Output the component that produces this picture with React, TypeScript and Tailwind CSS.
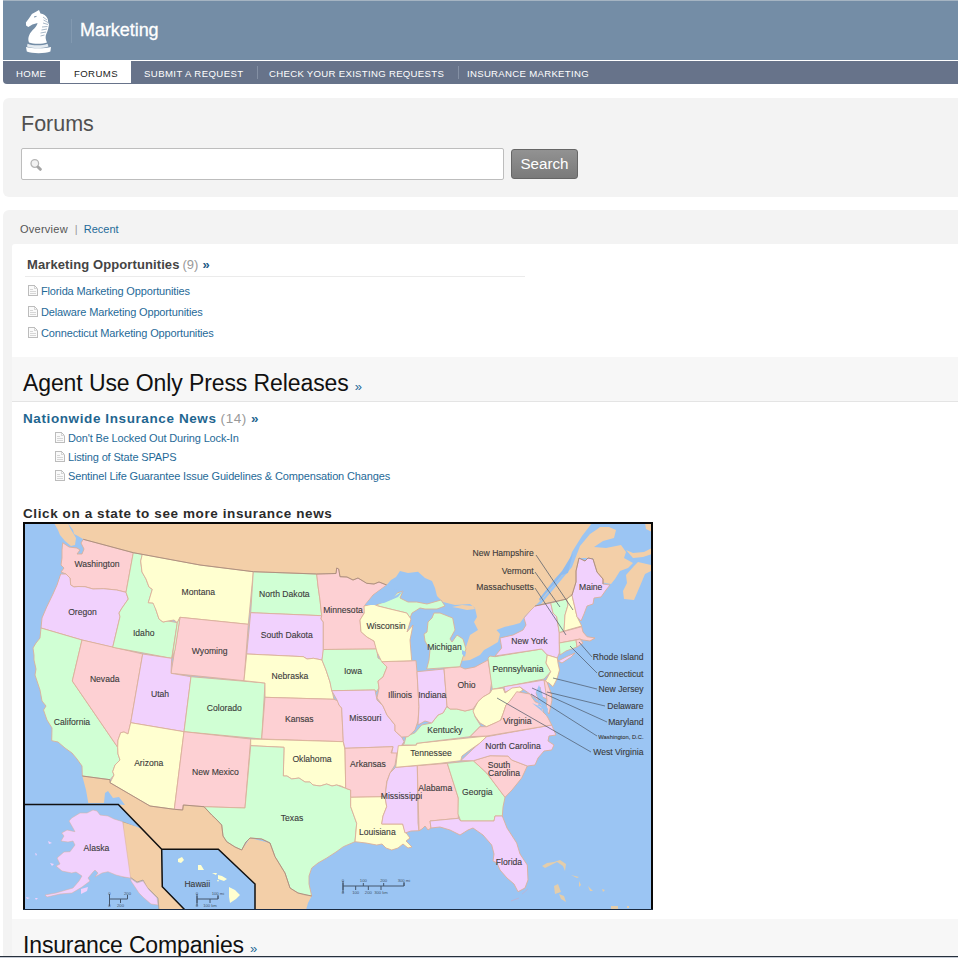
import React from "react";

const GREEN = "#d0ffd4";
const PINK = "#fdd0d3";
const VIOLET = "#f1d1fd";
const CREAM = "#ffffd0";
const LAND = "#f3cfa8";
const WATER = "#9bc5f3";

const land: string[] = [
  // Canada, from the Pacific coast to the Gulf of St Lawrence
  "68,523 70,526 73,530 74,534 78,536 83.3,539.3 133.3,552.7 200,565 253.3,571.7 316.7,574 336,573.5 336.7,568 338.7,569 340,576.7 347,577 353,580 358,578 366.7,583.3 374,584 379,582 386.7,585 391,580 396,577 400,571 408,573 418,571.7 425,578 432,581 435,588 437,596 443,602 455,605 470,604 475,608 477,617 474,622 478,630 470,635 465,650 463,656 461.5,661 470,660 480,655 484,650 490,646.7 498,642 500,634 496.5,630 505,626.7 513,625 520,623 525,616 535,606 545,596 556,582 566,571 572,552 582,536 592,523",
  // New Brunswick and the Gaspe
  "541,604 552,591 562,579 572,567 580,546 590,534 596,530 600,527 609,527 616,530 614,538 603,541 594,547 606,548 621,545 626,552 624,558 633,563 628,568 620,571 615,579 611,584 600,582 593,558 580,558 576,582 573,594 566.7,599",
  // Nova Scotia
  "626,575 634,566 638,562 651,565 651,571 645,574 640,586 634,600 624,599 623,591 627,583",
  "626,550 633,553 644,552 652,548 652,554 643,557 633,558",
  "645,523 652,523 652,532 646,529",
  // Vancouver Island
  "54,523 68,523 70,528 76,538 75,545 71,546 65,541 60,535 58,530",
  // Manitoulin
  "452,607 462,605 473,606 475,609 467,610 458,608",
  // Mexico
  "82.3,776 110,779.7 110,782.7 150,806 174.3,809.3 182.7,810 183.3,805 204,806.7 212,815 221.7,825 226.7,841.7 241.7,850 250,838 270,843 285,873 290,888 311.7,896 308,903 306,910 255,910 150,910 115,803 88.3,803 86,790",
];

const states: [string, string][] = [
  [PINK, "62.7,542.7 69,547 77,548 80,550 77,554 82,554 84,549 81,543 83.3,539.3 133.3,552.7 126,592.3 116.7,590 103.3,588.7 93,589 85,586.7 78,586.5 74,587 70.7,585 70,578 66,574 61,572 64,568 61,565 62,558 62,550"],
  [VIOLET, "60.7,574 66,574 70,578 70.7,585 74,587 78,586.5 85,586.7 93,589 103.3,588.7 116.7,590 126,592.3 128.3,599 122,608 119,613 120,616.7 112.7,647.3 82,640 41,628 42,618 46.7,607 53,594 57,585"],
  [GREEN, "41,628 82,640 72.3,681 117.7,747.3 118,754 120,760 115,765 112.7,771.7 114,775 110,779.7 82.3,776 82,766 77,759 72,753 65,748 58,742 51.7,740.7 52,728 47,720 43.5,710 46,706 42,701 40,690 35,675 36,669 34,660 34,655 33,648 36,643 40,638"],
  [PINK, "82,640 142.7,654 130.7,722.7 128,734 124,732 120.7,732.7 118,740 117.7,747.3 72.3,681"],
  [GREEN, "133.3,552.7 142.3,554.3 140.7,561 142,572 146,579 149,587 152.3,589.3 150,597 148.3,602.7 154,603 156,610 159,619 163,622 168,621 174,622 177.3,622.7 171.7,658.3 112.7,647.3 120,616.7 119,613 122,608 128.3,599 126,592.3"],
  [CREAM, "142.3,554.3 200,565 253.3,571.7 248.3,624.3 180,617.3 177.3,622.7 174,620 168,621 163,622 159,619 156,610 153,603 148.3,602.7 150,597 152.3,589.3 149,587 146,579 142,572 140.7,561"],
  [PINK, "180,617.3 248.3,624.3 244,680.7 171,673.3"],
  [GREEN, "180,617.3 177.3,622.7 172,658.3 175,650"],
  [VIOLET, "142.7,654 171.7,658.3 171,673.3 191,676.7 184,731.7 130.7,722.7"],
  [GREEN, "191,676.7 265,683 261.7,739 184,731.7"],
  [CREAM, "130.7,722.7 184,731.7 174.3,809.3 150,806 110,782.7 114,775 112.7,771.7 115,765 120,760 118,754 117.7,747.3 118,740 120.7,732.7 124,732 128,734"],
  [PINK, "184,731.7 250.7,739 245,808 204,806.7 183.3,805 182.7,810 174.3,809.3"],
  [GREEN, "253.3,571.7 316.7,574 318,586 320,600 321.7,615.7 250.7,612.7"],
  [VIOLET, "250.7,612.7 321.7,615.7 321,619 323.3,622 323.3,651.7 322,660 313.3,658.3 307,659 303.3,656.7 246.7,654"],
  [CREAM, "246.7,654 303.3,656.7 307,659 313.3,658.3 322,660 326,670 330,682 334,699.3 265,697.3 265,683 244,680.7"],
  [PINK, "265,697.3 334,699.3 338,701 339,705 341.7,708 343.3,741.7 261.7,739"],
  [CREAM, "250.7,739 343.3,741.7 345,750 345.7,788.3 341,786 336.7,785 332,786 326.7,784 320,786 313,785 310,782 305,782 299,778 291.7,779 287,776 283.3,776 284,747.3 250.7,745.7"],
  [GREEN, "250.7,745.7 284,747.3 283.3,776 287,776 291.7,779 299,778 305,782 310,782 313,785 320,786 326.7,784 332,786 336.7,785 345.7,788.3 350.7,790 350.7,806.7 356.7,823.3 355,841.7 343.3,846.7 336,852 326.7,858 318,863 311.7,868 309,876 309,884 311.7,896 305,895 298,893 290,888 285,873 275,856.7 270,843 261.7,839 250,838 246,842 241.7,850 235,847 226.7,841.7 223,836 221.7,825 216,819 211.7,815 204,806.7 245,808"],
  [PINK, "316.7,574 336,573.5 336.7,568 338.7,569 340,576.7 347,577 353,580 358,578 366.7,583.3 374,584 379,582 386.7,585 373,595 365,605 364.3,613 360,620 361,631.7 367,637 374,641 376.7,649 323.3,649.5 323.3,622 321,619 321.7,615.7 320,600 318,586"],
  [GREEN, "323.3,649.5 376.7,649 378,658 383,661 387,667 383,677 378,681 379,688 376,692 375,690 331.7,690.7 330,682 326,670 322,660"],
  [VIOLET, "331.7,690.7 375,690 377,700 383,706 387,715 395,725 395,731 401.7,737 404,741.7 400,748 397,754 391.7,753 393,746.7 345,748.3 343.3,741.7 341.7,708 339,705 337,700"],
  [PINK, "345,748.3 393,746.7 391,753 397,753 395,765 390,773 386.7,781.7 385,796.7 350.7,797.3 350.7,790 345.7,788.3"],
  [CREAM, "350.7,797.3 385,796.7 386.7,806.7 383,816 381.7,824 402.7,824 405,831.7 407,834 410,838 406,841 412,847 408,848 403,844 398,848 391.7,850 386,848 382,844 376.7,845 366,843 355,841.7 356.7,823.3 350.7,806.7"],
  [VIOLET, "395.7,767.3 417.3,765.7 418,823 419,830.7 411,831 405,833 402.7,824 381.7,824 383,816 386.7,806.7 385,796.7 387,781.7 390,773"],
  [PINK, "417.3,765.7 447.3,763.3 458.3,798 458.3,818.3 430,821 431,828 428,830 425,826 422,829 419,830.7"],
  [GREEN, "447.3,763.3 473.3,760.7 486.7,773 505,797.3 503,807 502.3,816 495,816 494,821 460.7,821 458,814 458.3,798"],
  [VIOLET, "430,821 458.3,818.3 460.7,821 494,821 495,816 502.3,816 507,828 516.7,843 520,854 527.3,865 528,880 525,888 518,891.7 514,884 507,878 500,870 497,863 493,861 494,854 491.7,845 483,835 473,828 468,830 460,835 450,830 440,827 431,828"],
  [PINK, "473.3,760.7 490,755.7 508,756 511.7,760 527.3,766 521.7,778 512,790 505,797.3 495,784 486.7,773"],
  [VIOLET, "460.7,760.7 473,749 486.7,736.7 551.7,725 556,735 549,736 548,741 554,745 551.7,750 544,751 538,758 535,765 527.3,766 511.7,760 508,756 490,755.7 473.3,760.7"],
  [CREAM, "398.3,745.7 416.7,745 416.7,743.3 487,736 480,743 470,750 462,756 460.7,760.7 440,763.3 395.7,767.3"],
  [GREEN, "404,744 406,736.7 415,732.7 421.7,725 431.7,723 438,715 443,713 446.7,706.7 450,709 456.7,709 465,711 473.3,709 475,716.7 480.7,725.7 470,736.7 416.7,743.3 416,745 402,745"],
  [PINK, "381.7,661.7 416,660.7 417,672 419,706.7 418,721 415,730 408,736.7 401.7,737 395,731 395,725 387,715 383,706 377,698 379,688 378,681 383,677 387,667"],
  [VIOLET, "417,671.7 444,669 447,706 443,713 438,715 431.7,723 425,721 418,725 419,706.7"],
  [PINK, "444,668.3 460,666.7 465,669 475,667 488,660 491.7,681.7 490,693 483,697 478,701.7 473,709 465,711 456.7,709 450,709 447,706"],
  [GREEN, "426.7,669 429,660 430,650 425,641 424,634 427,632 428,622 432,618 434,613 440,613 452.7,618 455,630 450,639 452,642 457,635 463,639 466,649 463,657 460,666.7"],
  [GREEN, "369,608 393,598 397,593 403,591 400,598 408,602 416.7,602 427,604 441,600 445,606 437,609 425,609 420,608 412,613 410,618 406.7,613 390,609 378,606"],
  [CREAM, "364,606 373,604 378,606 390,609 406.7,613 411,619 407,632 413,625 410,640 411.7,660.7 381.7,661.7 377,652 374,641 367,637 361,631.7 360,620 364.3,613"],
  [GREEN, "488,658 490,656 495,656.7 541.7,649 547.3,655 546,663 550.7,671.7 544,679 492.3,689.3"],
  [VIOLET, "495,656 501.7,648 500,638 513,635 523,630 526,625 524,618 530,611 535,606 550.7,603 553,613 556.7,616.7 559.3,633 559.3,653 557.3,658 547.3,655 541.7,649"],
  [VIOLET, "558,661 568,656 575,653 571,657 562,663"],
  [CREAM, "547.3,655 557.3,658 558,663 559.5,670 557,679 553,686.7 549,683 545,681.7 550.7,671.7 546,663"],
  [VIOLET, "504,686.7 544,680 548,693 552,694 550,700 542,697 540,687 536,693 539,701 530,694 520,687 505,692"],
  [PINK, "544,680 547,682 551,693 552,700 549,714 546,710 547,700"],
  [GREEN, "550.7,603 566.7,599 568,605 565,615 564,631 559.3,632.7 556.7,616.7 553,613"],
  [CREAM, "566.7,599 571.7,594 577,616.7 581.7,626 564,631 565,615 568,605"],
  [VIOLET, "572,595 576,582 576,571 579,558 585,561 588,558 593,559 597,572 603,579 603,584 610,585 606,590 601,597 594,598 593,604 587,606 584,614 581,621 577,616.7"],
  [PINK, "559.3,632.7 581.7,626.7 583,632 587,636.7 595,638 590,641 583,640 580,639 559.3,643"],
  [GREEN, "559.3,643 576,640 577,647 566,651 560,655"],
  [PINK, "576,640 580,639 583,643 577,647"],
  [CREAM, "492.3,689.3 503,688 505,693 512,688 520,687 523,690 515,695 510,701 506,705 503,714 500,721 495,723 486.7,726.7 480,723 475,716 473,711 478,701.7 483,697 490,693"],
  [PINK, "470,736.7 480,726.7 486.7,726.7 495,723 501,720 503,714 506,705 510,701 516.7,691.7 530,694 535,701.7 543,705 543,712 547,716 551.7,725 487,736"],
];

const labels: [string, number, number][] = [
  ["Washington", 97, 567.5], ["Oregon", 82.5, 615.5], ["Idaho", 143.7, 636.5], ["Montana", 198.3, 595],
  ["Wyoming", 209.7, 654.5], ["Nevada", 104.7, 682.5], ["Utah", 160, 697], ["Colorado", 224.3, 711.5],
  ["California", 72, 725.5], ["Arizona", 148.7, 766], ["New Mexico", 215.5, 775], ["North Dakota", 284.3, 597],
  ["South Dakota", 286.7, 638.7], ["Nebraska", 290, 679], ["Kansas", 299.3, 722], ["Oklahoma", 312, 762.5],
  ["Texas", 292, 821], ["Minnesota", 343, 613], ["Wisconsin", 386, 629.5], ["Iowa", 353, 674.5],
  ["Missouri", 365.3, 721.5], ["Arkansas", 368, 767.5], ["Louisiana", 377.3, 835.5], ["Mississippi", 401.5, 799.5],
  ["Alabama", 435.3, 791], ["Illinois", 400, 698.5], ["Indiana", 432.3, 698], ["Michigan", 444.5, 650.5],
  ["Ohio", 466.5, 688.5], ["Kentucky", 445, 733.5], ["Tennessee", 431, 756.5], ["Georgia", 477.3, 795.5],
  ["Florida", 509, 865.5], ["South", 499, 768], ["Carolina", 504, 776.5], ["North Carolina", 513, 749.5],
  ["Virginia", 517.3, 724.7], ["Pennsylvania", 518, 672], ["New York", 529.5, 644.5], ["Maine", 590.7, 590.7],
  ["Alaska", 96.5, 851.5], ["Hawaii", 197.3, 887.5],
];

const callouts: [string, number, number][] = [
  ["New Hampshire", 533.7, 556.7], ["Vermont", 533.7, 574], ["Massachusetts", 533.7, 590.5],
  ["Rhode Island", 643.5, 660.7], ["Connecticut", 643.5, 677], ["New Jersey", 643.5, 692.5],
  ["Delaware", 643.5, 709.5], ["Maryland", 643.5, 725], ["West Virginia", 643.5, 755.5],
];

const leaders = [
  "536,555 573,610", "535,572 560,607", "535,588 566,635", "592,657 579,642", "597,673 570,646",
  "597,689 553,678", "605,706 547,692", "607,722 532,688", "597,736 531,694", "591,752 497,698",
];

function ScaleBar({ x, y, w, top, bottom, span }: { x: number; y: number; w: number; top: string[]; bottom: string[]; span: number }) {
  return (
    <g stroke="#44566c" strokeWidth="1" fill="none">
      <path d={`M${x} ${y - 5}V${y + 7}M${x} ${y}H${x + w}V${y - 4}`} />
      {top.map((t, i) => (
        <g key={i}>
          <path d={`M${x + (w * i) / (top.length - 1)} ${y - 3}V${y}`} />
          <text x={x + (w * i) / (top.length - 1)} y={y - 4} fontSize="4.2" textAnchor="middle" fill="#44566c" stroke="none">{t}</text>
        </g>
      ))}
      {bottom.map((t, i) => (
        <g key={i}>
          <path d={`M${x + (span * i) / (bottom.length - 1)} ${y}V${y + 4}`} />
          <text x={x + (span * i) / (bottom.length - 1)} y={y + 8} fontSize="4.2" textAnchor="middle" fill="#44566c" stroke="none">{t}</text>
        </g>
      ))}
    </g>
  );
}

function UsMap() {
  return (
    <svg viewBox="23 522 630 388" className="block h-[388px] w-[630px]">
      <rect x="23" y="522" width="630" height="388" fill={WATER} />
      {land.map((p, i) => <polygon key={i} points={p} fill={LAND} />)}
      <g stroke="#dbb09a" strokeWidth="0.9" strokeLinejoin="round">
        {states.map(([c, p], i) => <polygon key={i} points={p} fill={c} />)}
      </g>
      <g fill="none" stroke="#a98d7c" strokeWidth="0.9" strokeLinejoin="round">
        <polyline points="83.3,539.3 133.3,552.7 200,565 253.3,571.7 316.7,574 336,573.5 336.7,568 338.7,569 340,576.7 347,577 353,580 358,578 366.7,583.3 374,584 379,582 386.7,585" />
        <polyline points="82.3,776 110,779.7 110,782.7 150,806 174.3,809.3 182.7,810 183.3,805 204,806.7 211.7,815 216,819 221.7,825 223,836 226.7,841.7 235,847 241.7,850 246,842 250,838 261.7,839 270,843 275,856.7 285,873 290,888 298,893 311.7,896" />
        <polyline points="535,606 566.7,599 572,595 576,582 576,571 579,558 585,561 588,558 593,559 597,572 603,579 603,584" />
      </g>
      {/* Chesapeake and Delaware bays */}
      <path d="M539 685l-3 7 3 9-1 5 6 4 3 7 1-8-4-7-2-9zM531 697l8 4 3 5zM532 703l9 4 2 5z" fill={WATER} />
      {/* Lake St Clair, western Lake Superior and the St Lawrence */}
      <path d="M462 650l4 2-1 5-3-3z" fill={WATER} />
      <path d="M365 605l10-11 12-9 14-8 2 3-9 10 6-1-7 9-18 7zM375 604l16-5 13-9-6 7-14 6z" fill={WATER} />
      <path d="M540 601l22-26 6-2 5-20-11 18-8 9-15 19" fill="#8fbcef" />
      {/* Gulf of California */}
      <path d="M104 803l1-10 3-2 5 7 6-1 6 8z" fill={WATER} />

      <g>
        <polygon points="23,804.5 118.3,804.5 161.7,849.3 162.3,886.7 185,910 23,910" fill={WATER} />
        <polygon points="122.7,821.7 135,825.7 138,824 161.7,849.3 162.3,886.7 185,910 159,910 158,898 147,887 143,880 137,882 130,877 122.7,876.7" fill={LAND} stroke="#a98d7c" strokeWidth="0.6" />
        <path d="M118 804.5L142 829 132 825 122 821 108 816z" fill={WATER} />
        <polygon points="122.7,821.7 114,819 108,816 100,815 97,811 93,810 87,813 80,813 71.7,818 69,821 73,828 75,831.7 67,830 61.7,833 64,836 61,841 68,842 73,841 75,845 70,851.7 64,852 57,858 60,864 56,866 62,871 71.7,873 76,872 82,876 79,881 73,888 66,890 56,893 45,895 47,897 60,894 72,893 82,887 90,881 88,878 93,872 95,870 98,873 95,877 102,873 108,871.7 116,875 122.7,876.7 130,878 137,883 143,881 149,890 157,898 158,905 151,904 144,898 139,893 135,887 131,881" fill={VIOLET} stroke="#dbb09a" strokeWidth="0.5" />
        <path d="M81 889l7-2-1 4-6 3zM50 863l4 1-2 2zM48 841l4 2-3 1zM35 853l2 1-1 2zM35 898l3 0-2 2zM26 897l4 1-3 1z" fill={VIOLET} />
        <polygon points="161.7,849.3 218.3,849.3 255,884 255,910 185,910 162.3,886.7" fill={WATER} />
        <path d="M178 859l4-2 2 3-3 3-3-1zM198 865l3 0 3 5-6 0zM212 873l5 0-1 2zM218 875l4 1 5 3-3 2-6-2zM217 880l2 0-1 2zM229 887l6 3 5 5-4 4-6 4-1-6z" fill={CREAM} />
        <path d="M23 804.5H118.3L161.7 849.3H218.3L255 884V910M161.7 849.3L162.3 886.7 185 910" fill="none" stroke="#111" strokeWidth="1.5" />
      </g>

      {/* Bahamas and Cuba */}
      <path d="M542 866l5-3 7-1 6-2 6 4-1 7-2-5-6-4-6 3-6 3zM554 886l4-2 3 8-6 2zM559 894l5 2 2 6-5-3zM571 875l8 2-2 1zM579 881l2 4-2 2zM588 886l5 5-3 0zM602 889l3 1-2 2zM611 906l7 0 0 3-7 0zM627 906l2 0 0 2-2 0z" fill="#e4cdaa" />
      <path d="M511 901l8-3M522 894l6-5" stroke="#b9b6d8" strokeWidth="1" fill="none" />

      <g fill="none" stroke="#4b5666" strokeWidth="0.7">
        {leaders.map((p) => <polyline key={p} points={p} />)}
      </g>
      <g transform="translate(0 -0.4)" fill="#3a3a3a" stroke="#3a3a3a" strokeWidth="0.1" fontSize="8.6" fontFamily='"Liberation Sans", Arial, sans-serif'>
        {labels.map(([t, x, y]) => <text key={t} x={x} y={y} textAnchor="middle">{t}</text>)}
        {callouts.map(([t, x, y]) => <text key={t} x={x} y={y} textAnchor="end">{t}</text>)}
        <text x="643.5" y="739.5" fontSize="5.8" textAnchor="end">Washington, D.C.</text>
      </g>
      <g fontFamily='"Liberation Sans", Arial, sans-serif'>
        <ScaleBar x={343} y={886} w={61} span={38} top={["0", "100", "200", "300 mi"]} bottom={["0", "100", "200", "300 km"]} />
        <ScaleBar x={109.5} y={899} w={18} span={11} top={["0", "200"]} bottom={["0", "200"]} />
        <ScaleBar x={197} y={899} w={21} span={13} top={["0", "100 mi"]} bottom={["0", "100 km"]} />
      </g>
      <path d="M24 522V910M652 522V910" stroke="#080808" strokeWidth="2" />
      <path d="M23 523H653" stroke="#080808" strokeWidth="2" />
      <path d="M23 909.5H653" stroke="#1a2a40" strokeWidth="1" />
    </svg>
  );
}

function Knight() {
  return (
    <svg viewBox="24 9 30 46" className="h-[46px] w-[30px]">
      <path d="M39 10l1.500 3.500c3 .5 5.500 2 7 5 .8 2 .3 4 1.500 6-.5 3-1 6-2.500 9-1.500 3-1 6 .5 9-4 1.800-14 1.800-18 0-2-5 .8-10 5.300-14 2-2 3-4 3.200-5.500-2 .8-4.700.8-6.700 2.500l-2.500 1.500-2.200-1.500-.2-3 3-4 3-4.500 4.500-2.500z" fill="#fff" />
      <path d="M43 17l4 3M43.500 20l4.500 2.500M43 23l5 1.500M42 27l5.500-.5M41.500 30l5.500-1M40.500 33l5.500-1M40.500 36l4-1" stroke="#90a4b9" strokeWidth="0.8" />
      <path d="M34 17l2.500-.6" stroke="#748da6" strokeWidth="1" />
      <path d="M27.500 43.800c5 2 15 2 20 0l1 2.700c-6 2.200-16 2.200-21.500 0z" fill="#e3eaf0" />
      <path d="M26 47c6 1.800 19 1.800 25 0l-.6 4.500c-5 2.200-18.500 2.200-23.600 0z" fill="#fff" />
    </svg>
  );
}

function DocIcon() {
  return (
    <svg viewBox="0 0 10 12" className="mb-[2px] h-[12px] w-[10px] shrink-0" shapeRendering="crispEdges">
      <path d="M.5.5h6l3 3v7h-9z" fill="#fafafa" stroke="#bcbcbc" />
      <path d="M6.500.5v3h3M2 4.500h3M2 6.500h6M2 8.500h6" stroke="#d6d6d6" fill="none" />
    </svg>
  );
}

function TopicLink({ text, className }: { text: string; className: string }) {
  return (
    <li className={"flex items-center text-[11px] text-[#1f6a98] " + className}>
      <DocIcon />
      <a className="ml-[3px]">{text}</a>
    </li>
  );
}

export default function App() {
  return (
    <div className="flex h-[958px] w-[958px] flex-col overflow-hidden whitespace-nowrap bg-white font-['Liberation_Sans',Arial,sans-serif] leading-none">
      <header className="ml-[3px] shrink-0">
        <div className="flex h-[60px] items-center border-t border-[#a5b4c2] bg-[#748da6]">
          <div className="ml-[21px] mt-[3px]"><Knight /></div>
          <div className="ml-[17px] h-[24px] w-px bg-[#8299b0]" />
          <h1 className="ml-[8px] mt-[-2px] text-[18px] tracking-[-0.05px] text-white [-webkit-text-stroke:0.3px_white]">Marketing</h1>
        </div>
        <nav className="mt-px flex h-[23px] items-center rounded-bl-[4px] bg-[#67738a] text-[9.6px] tracking-[0.4px] text-white">
          <a className="w-[57px] pl-[13px] pt-[2px]">HOME</a>
          <a className="flex h-[22px] w-[71px] items-center self-start bg-white pl-[14px] pt-[3px] text-[#222]">FORUMS</a>
          <a className="w-[126px] pl-[13px] pt-[2px]">SUBMIT A REQUEST</a>
          <a className="w-[201px] border-l border-[#8490a4] pb-[1px] pl-[11px] pt-[3px] tracking-[0.3px]">CHECK YOUR EXISTING REQUESTS</a>
          <a className="border-l border-[#8490a4] pb-[1px] pl-[8px] pt-[3px] tracking-[0.3px]">INSURANCE MARKETING</a>
        </nav>
      </header>

      <section className="ml-[3px] mt-[14px] h-[99px] shrink-0 rounded-l-[6px] bg-[#f3f3f3] pl-[18px] pt-[15px]">
        <h2 className="text-[21.5px] leading-[22px] text-[#505050]">Forums</h2>
        <div className="mt-[13px] flex items-center">
          <div className="flex h-[32px] w-[483px] items-center rounded-[2px] border border-[#bdbdbd] bg-white pl-[8px]">
            <svg viewBox="0 0 12 12" className="mt-[1px] h-[12px] w-[12px]" fill="none">
              <circle cx="4.8" cy="4.5" r="3.8" stroke="#b5b5b5" strokeWidth="1.3" fill="#f3f3f3" />
              <path d="M8 8l2.300 2.300" stroke="#a5a5a5" strokeWidth="3" strokeLinecap="round" />
            </svg>
          </div>
          <button className="ml-[7px] h-[30px] w-[67px] rounded-[3px] border border-[#666] bg-gradient-to-b from-[#929292] to-[#7a7a7a] text-[15.2px] leading-none text-white">Search</button>
        </div>
      </section>

      <main className="ml-[3px] mt-[13px] flex min-h-0 grow flex-col rounded-tl-[6px] bg-[#f3f3f3] pl-[9px]">
        <div className="flex h-[34px] shrink-0 items-center pl-[8px] pt-[5px] text-[11px]">
          <span className="tracking-[0.25px] text-[#555]">Overview</span>
          <span className="ml-[7px] text-[#999]">|</span>
          <a className="ml-[6px] text-[#1f6a98]">Recent</a>
        </div>
        <div className="flex grow flex-col rounded-tl-[3px] bg-white">
          <section className="h-[113px] shrink-0 pl-[13px] pt-[12px]">
            <h3 className="flex h-[21px] w-[500px] items-start border-b border-[#ebebeb] pl-[2px] text-[13px] leading-[18px] text-[#444]">
              <b className="tracking-[0.1px]">Marketing Opportunities</b>
              <span className="ml-[3px] text-[#999]">(9)</span>
              <b className="ml-[4px] text-[#1c5a85]">»</b>
            </h3>
            <ul className="mt-[4px] pl-[3px] tracking-[-0.15px]">
              <TopicLink className="h-[21px]" text="Florida Marketing Opportunities" />
              <TopicLink className="h-[21px]" text="Delaware Marketing Opportunities" />
              <TopicLink className="h-[21px]" text="Connecticut Marketing Opportunities" />
            </ul>
          </section>

          <h2 className="flex h-[45px] shrink-0 items-baseline border-b border-[#e4e4e4] bg-[#f7f7f7] pl-[11px] pt-[12px] text-[23px] leading-[28px] tracking-[-0.1px] text-[#111]">
            Agent Use Only Press Releases<span className="ml-[6px] text-[13px] text-[#1f6a98]">»</span>
          </h2>

          <section className="h-[517px] shrink-0 pl-[11px]">
            <h3 className="flex h-[27px] items-center pt-[6px] text-[13.5px] text-[#1f6690]">
              <b className="tracking-[0.6px]">Nationwide Insurance News</b>
              <span className="ml-[4px] tracking-[0.6px] text-[#999]">(14)</span>
              <b className="ml-[4px]">»</b>
            </h3>
            <ul className="pl-[32px] tracking-[-0.15px]">
              <TopicLink className="h-[19px]" text="Don't Be Locked Out During Lock-In" />
              <TopicLink className="h-[19px]" text="Listing of State SPAPS" />
              <TopicLink className="h-[19px]" text="Sentinel Life Guarantee Issue Guidelines & Compensation Changes" />
            </ul>
            <p className="flex h-[36px] items-end pb-[2px] text-[13.5px] font-bold tracking-[0.6px] text-[#2b2b2b]">Click on a state to see more insurance news</p>
            <UsMap />
          </section>

          <h2 className="flex h-[37px] shrink-0 items-baseline bg-[#f7f7f7] pl-[11px] pt-[15px] text-[23px] leading-[22px] tracking-[-0.15px] text-[#111]">
            Insurance Companies<span className="ml-[6px] text-[13px] text-[#1f6a98]">»</span>
          </h2>
        </div>
      </main>
      <div className="h-[2px] shrink-0 border-t border-[#26303c] bg-[#c5cad4]" />
    </div>
  );
}
